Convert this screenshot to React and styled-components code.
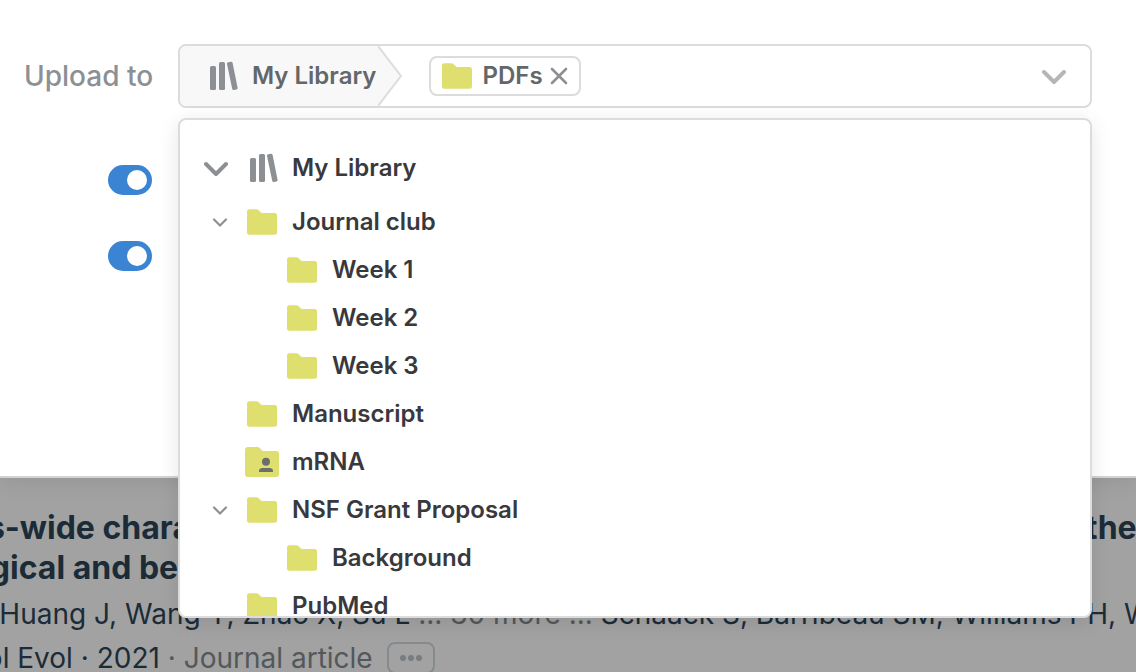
import React, { useState } from "react";
import styled, { createGlobalStyle } from "styled-components";

const colors = {
  border: "#dcdcdc",
  icon: "#8c9094",
  folder: "#dfdf70",
  text: "#39393d",
  crumb: "#636769",
  accent: "#3a84d3",
  backdrop: "#a2a2a2",
  ink: "#1b2c38",
  muted: "#53585b",
};

const tree = [
  { name: "My Library", depth: 0, icon: "library", open: true, root: true },
  { name: "Journal club", depth: 0, icon: "folder", open: true },
  { name: "Week 1", depth: 1, icon: "folder" },
  { name: "Week 2", depth: 1, icon: "folder" },
  { name: "Week 3", depth: 1, icon: "folder" },
  { name: "Manuscript", depth: 0, icon: "folder" },
  { name: "mRNA", depth: 0, icon: "shared" },
  { name: "NSF Grant Proposal", depth: 0, icon: "folder", open: true },
  { name: "Background", depth: 1, icon: "folder" },
  { name: "PubMed", depth: 0, icon: "folder" },
];

const GlobalStyle = createGlobalStyle`
  * {
    box-sizing: border-box;
  }

  body {
    margin: 0;
    background-color: ${colors.backdrop};
    font-family: Inter, "Liberation Sans", sans-serif;
  }
`;

const Page = styled.div`
  height: 100vh;
  overflow: hidden;
`;

const Button = styled.button`
  display: flex;
  align-items: center;
  padding: 0;
  border: 0;
  background: none;
  color: inherit;
  font: inherit;
  cursor: pointer;
`;

const Icon = styled.svg`
  flex: none;
  width: 36px;
  height: 36px;
`;

const Modal = styled.section`
  position: relative;
  min-height: 478px;
  padding: 44px 44px 0 24px;
  background-color: #fff;
  border-bottom: 2px solid #d2d2d2;
  box-shadow: 0 4px 20px rgba(0, 0, 0, 0.08);
`;

const Field = styled.div`
  display: flex;
  align-items: center;
`;

const Label = styled.span`
  flex: 0 0 154px;
  color: ${colors.icon};
  font-size: 28px;
  font-weight: 500;
`;

const Picker = styled.div`
  position: relative;
  flex: 1;
  height: 64px;
  display: flex;
  align-items: center;
  border: 2px solid ${colors.border};
  border-radius: 8px;
  color: ${colors.crumb};
  font-size: 24px;
  font-weight: 600;
  line-height: 28px;
`;

const Crumb = styled(Button)`
  align-self: stretch;
  gap: 12px;
  padding: 0 2px 0 24px;
  border-radius: 6px 0 0 6px;
  background-color: #f8f8f8;
`;

const CrumbTip = styled.svg`
  flex: none;
  width: 24px;
  height: 60px;
`;

const Chip = styled.span`
  display: flex;
  align-items: center;
  gap: 7px;
  height: 40px;
  margin-left: 27px;
  padding: 0 11px 0 8px;
  border: 2px solid ${colors.border};
  border-radius: 8px;
`;

const OpenButton = styled(Button)`
  margin: 0 24px 0 auto;
`;

const Menu = styled.ul`
  position: absolute;
  z-index: 1;
  top: 72px;
  left: -2px;
  right: -2px;
  max-height: 500px;
  margin: 0;
  padding: 18px 0;
  overflow: hidden;
  list-style: none;
  background-color: #fff;
  border: 2px solid ${colors.border};
  border-radius: 8px;
  box-shadow: 0 4px 20px rgba(0, 0, 0, 0.1);
  color: ${colors.text};
`;

const Row = styled.li`
  display: flex;
  align-items: center;
  height: ${(props) => (props.$root ? 60 : 48)}px;
  padding-left: ${(props) => 24 + props.$depth * 40}px;
`;

const Twisty = styled.span`
  display: flex;
  justify-content: center;
  width: ${(props) => (props.$root ? 24 : 32)}px;
  margin-right: ${(props) => (props.$root ? 16 : 8)}px;
`;

const Item = styled(Button)`
  gap: 12px;
`;

const Switches = styled.div`
  display: flex;
  flex-flow: column nowrap;
  gap: 46px;
  padding: 57px 0 0 84px;
`;

const Switch = styled.input`
  appearance: none;
  display: flex;
  align-items: center;
  width: 44px;
  height: 30px;
  margin: 0;
  padding: 0 5px;
  border-radius: 15px;
  background-color: ${(props) => (props.checked ? colors.accent : colors.icon)};

  &::before {
    content: "";
    width: 20px;
    height: 20px;
    margin-left: ${(props) => (props.checked ? "auto" : 0)};
    border-radius: 50%;
    background-color: #fff;
  }
`;

const Article = styled.article`
  margin-left: -96px;
  padding-top: 30px;
  color: ${colors.ink};
  white-space: nowrap;
`;

const Title = styled.h1`
  margin: 0 0 4px;
  font-size: 32px;
  font-weight: 700;
  line-height: 40px;
`;

const Line = styled.p`
  display: flex;
  align-items: center;
  margin: 0;
  font-size: 28px;
  line-height: 44px;
  white-space: pre;
`;

const Muted = styled.span`
  color: ${colors.muted};
`;

const MoreButton = styled(Button)`
  justify-content: center;
  width: 48px;
  height: 32px;
  margin-left: 14px;
  border: 2px solid #858a8e;
  border-radius: 8px;
`;

function LibraryIcon() {
  return (
    <Icon viewBox="0 0 36 36" aria-hidden="true">
      <g fill={colors.icon}>
        <rect x="6" y="8" width="6" height="24" rx="1.5" />
        <rect x="15" y="4" width="6" height="28" rx="1.5" />
        <path d="M24.3 4.2l2.6-.4a1.5 1.5 0 0 1 1.7 1.2l5 24.8a1.5 1.5 0 0 1-1.2 1.7l-2.4.5a1.5 1.5 0 0 1-1.8-1.2L23 6a1.5 1.5 0 0 1 1.3-1.8z" />
      </g>
    </Icon>
  );
}

function FolderIcon() {
  return (
    <Icon viewBox="0 0 36 36" aria-hidden="true">
      <path
        fill={colors.folder}
        d="M5.5 5.2h7c.8 0 1.400.3 1.900.8L17.500 9h13A2.500 2.500 0 0 1 33 11.500v16.800a2.500 2.500 0 0 1-2.500 2.500h-25A2.500 2.500 0 0 1 3 28.300V7.700a2.500 2.500 0 0 1 2.500-2.500z"
      />
    </Icon>
  );
}

function SharedFolderIcon() {
  return (
    <Icon viewBox="0 0 36 36" aria-hidden="true">
      <path
        fill={colors.folder}
        d="M4 3h9.500c.8 0 1.500.3 2 .8L18.800 7H32a3 3 0 0 1 3 3v20a3 3 0 0 1-3 3H4a3 3 0 0 1-3-3V6a3 3 0 0 1 3-3z"
      />
      <g fill="#6c6e6c">
        <circle cx="22" cy="17.7" r="4" />
        <path d="M15 28v-1c0-1.800 1.500-3 3.500-3h7c2 0 3.500 1.200 3.500 3v1z" />
      </g>
    </Icon>
  );
}

function Chevron({ big, color = colors.icon }) {
  return big ? (
    <svg width="24" height="24" viewBox="0 0 24 24" aria-hidden="true">
      <path d="M2 8l10 10L22 8" fill="none" stroke={color} strokeWidth="4" strokeLinecap="round" strokeLinejoin="round" />
    </svg>
  ) : (
    <svg width="16" height="16" viewBox="0 0 16 16" aria-hidden="true">
      <path d="M2 5.500l6 6 6-6" fill="none" stroke={color} strokeWidth="2.2" strokeLinecap="round" />
    </svg>
  );
}

const icons = { library: LibraryIcon, folder: FolderIcon, shared: SharedFolderIcon };

export default function App() {
  const [toggles, setToggles] = useState([true, true]);

  return (
    <Page>
      <GlobalStyle />
      <Modal>
        <Field>
          <Label id="upload-label">Upload to</Label>
          <Picker role="group" aria-labelledby="upload-label">
            <Crumb type="button">
              <LibraryIcon />
              My Library
            </Crumb>
            <CrumbTip viewBox="0 0 24 60" aria-hidden="true">
              <path d="M0 0l23 30L0 60z" fill="#f8f8f8" />
              <path d="M0 0l23 30L0 60" fill="none" stroke={colors.border} strokeWidth="2" />
            </CrumbTip>
            <Chip>
              <FolderIcon />
              PDFs
              <Button type="button" aria-label="Remove PDFs">
                <svg width="18" height="18" viewBox="0 0 18 18">
                  <path d="M2 2l14 14M16 2L2 16" stroke={colors.icon} strokeWidth="2.6" strokeLinecap="round" />
                </svg>
              </Button>
            </Chip>
            <OpenButton type="button" aria-label="Choose a collection">
              <Chevron big color="#b4b6b8" />
            </OpenButton>
            <Menu>
              {tree.map((e) => {
                const ItemIcon = icons[e.icon];
                return (
                  <Row key={e.name} $depth={e.depth} $root={e.root}>
                    <Twisty $root={e.root}>
                      {e.open && (
                        <Button type="button" aria-label={`Collapse ${e.name}`}>
                          <Chevron big={e.root} />
                        </Button>
                      )}
                    </Twisty>
                    <Item type="button">
                      <ItemIcon />
                      {e.name}
                    </Item>
                  </Row>
                );
              })}
            </Menu>
          </Picker>
        </Field>
        <Switches>
          {toggles.map((on, i) => (
            <Switch
              key={i}
              type="checkbox"
              role="switch"
              aria-label={`Option ${i + 1}`}
              checked={on}
              onChange={() => setToggles(toggles.map((t, j) => (j === i ? !t : t)))}
            />
          ))}
        </Switches>
      </Modal>
      <Article>
        <Title>
          Genus-wide characterization of bumblebee genomes provides insights into their evolution
          <br />
          ecological and behavioral traits
        </Title>
        <Line>
          Sun C, Huang J, Wang Y, Zhao X, Su L <Muted>... 30 more ...</Muted> Schaack S, Barribeau SM,
          Williams PH, Woodard SH
        </Line>
        <Line>
          Mol Biol Evol · 2021 <Muted>· Journal article</Muted>
          <MoreButton type="button" aria-label="More">
            <svg width="22" height="6" viewBox="0 0 22 6" fill="#777c80">
              <circle cx="3" cy="3" r="3" />
              <circle cx="11" cy="3" r="3" />
              <circle cx="19" cy="3" r="3" />
            </svg>
          </MoreButton>
        </Line>
      </Article>
    </Page>
  );
}
